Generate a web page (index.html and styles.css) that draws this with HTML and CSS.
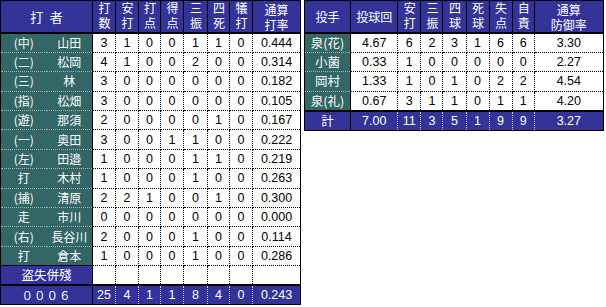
FILE: index.html
```html
<!DOCTYPE html>
<html lang="ja">
<head>
<meta charset="utf-8">
<link rel="stylesheet" href="styles.css">
</head>
<body>
<div class="sheet">
  <table class="grid bat">
    <colgroup>
      <col class="w46"><col class="w46">
      <col class="w23"><col class="w23"><col class="w22"><col class="w23"><col class="w24"><col class="w22"><col class="w23">
      <col class="w48">
    </colgroup>
    <thead>
      <tr>
        <th colspan="2" class="spaced">打&ensp;者</th>
        <th><span class="v">打数</span></th><th><span class="v">安打</span></th><th><span class="v">打点</span></th><th><span class="v">得点</span></th><th><span class="v">三振</span></th><th><span class="v">四死</span></th><th><span class="v">犠打</span></th><th>通算<br>打率</th>
      </tr>
    </thead>
    <tbody>
      <tr><td class="pos">(中)</td><td class="name">山田</td><td>3</td><td>1</td><td>0</td><td>0</td><td>1</td><td>1</td><td>0</td><td>0.444</td></tr>
      <tr><td class="pos">(二)</td><td class="name">松岡</td><td>4</td><td>1</td><td>0</td><td>0</td><td>2</td><td>0</td><td>0</td><td>0.314</td></tr>
      <tr><td class="pos">(三)</td><td class="name">林</td><td>3</td><td>0</td><td>0</td><td>0</td><td>0</td><td>0</td><td>0</td><td>0.182</td></tr>
      <tr><td class="pos">(指)</td><td class="name">松畑</td><td>3</td><td>0</td><td>0</td><td>0</td><td>0</td><td>0</td><td>0</td><td>0.105</td></tr>
      <tr><td class="pos">(遊)</td><td class="name">那須</td><td>2</td><td>0</td><td>0</td><td>0</td><td>0</td><td>1</td><td>0</td><td>0.167</td></tr>
      <tr><td class="pos">(一)</td><td class="name">奥田</td><td>3</td><td>0</td><td>0</td><td>1</td><td>1</td><td>0</td><td>0</td><td>0.222</td></tr>
      <tr><td class="pos">(左)</td><td class="name">田邉</td><td>1</td><td>0</td><td>0</td><td>0</td><td>1</td><td>1</td><td>0</td><td>0.219</td></tr>
      <tr><td class="pos">打</td><td class="name">木村</td><td>1</td><td>0</td><td>0</td><td>0</td><td>1</td><td>0</td><td>0</td><td>0.263</td></tr>
      <tr><td class="pos">(捕)</td><td class="name">清原</td><td>2</td><td>2</td><td>1</td><td>0</td><td>0</td><td>1</td><td>0</td><td>0.300</td></tr>
      <tr><td class="pos">走</td><td class="name">市川</td><td>0</td><td>0</td><td>0</td><td>0</td><td>0</td><td>0</td><td>0</td><td>0.000</td></tr>
      <tr><td class="pos">(右)</td><td class="name">長谷川</td><td>2</td><td>0</td><td>0</td><td>0</td><td>1</td><td>0</td><td>0</td><td>0.114</td></tr>
      <tr><td class="pos">打</td><td class="name">倉本</td><td>1</td><td>0</td><td>0</td><td>0</td><td>1</td><td>0</td><td>0</td><td>0.286</td></tr>
      <tr class="misc"><td colspan="2" class="label">盗失併殘</td><td></td><td></td><td></td><td></td><td></td><td></td><td></td><td></td></tr>
      <tr class="total"><td colspan="2" class="label wide">０００６</td><td>25</td><td>4</td><td>1</td><td>1</td><td>8</td><td>4</td><td>0</td><td>0.243</td></tr>
    </tbody>
  </table>

  <table class="grid pit">
    <colgroup>
      <col class="w46"><col class="w47">
      <col class="w23"><col class="w22"><col class="w23"><col class="w23"><col class="w23"><col class="w22">
      <col class="w69">
    </colgroup>
    <thead>
      <tr>
        <th>投手</th><th>投球回</th><th><span class="v">安打</span></th><th><span class="v">三振</span></th><th><span class="v">四球</span></th><th><span class="v">死球</span></th><th><span class="v">失点</span></th><th><span class="v">自責</span></th><th>通算<br>防御率</th>
      </tr>
    </thead>
    <tbody>
      <tr><td class="pname">泉(花)</td><td class="ip">4.67</td><td>6</td><td>2</td><td>3</td><td>1</td><td>6</td><td>6</td><td>3.30</td></tr>
      <tr><td class="pname">小菌</td><td class="ip">0.33</td><td>1</td><td>0</td><td>0</td><td>0</td><td>0</td><td>0</td><td>2.27</td></tr>
      <tr><td class="pname">岡村</td><td class="ip">1.33</td><td>1</td><td>0</td><td>1</td><td>0</td><td>2</td><td>2</td><td>4.54</td></tr>
      <tr><td class="pname">泉(礼)</td><td class="ip">0.67</td><td>3</td><td>1</td><td>1</td><td>0</td><td>1</td><td>1</td><td>4.20</td></tr>
      <tr class="total"><td class="label">計</td><td class="ip">7.00</td><td>11</td><td>3</td><td>5</td><td>1</td><td>9</td><td>9</td><td>3.27</td></tr>
    </tbody>
  </table>
</div>
</body>
</html>
```

FILE: styles.css
```css
* { box-sizing: border-box; }

body {
  margin: 0;
  background: #ffffff;
  font-family: "Liberation Sans", "Noto Sans CJK JP", sans-serif;
  color: #000;
}

.sheet {
  display: flex;
  align-items: flex-start;
  gap: 3px;
}

.grid {
  border-collapse: collapse;
  table-layout: fixed;
  border: 1px solid #000;
}

.bat { width: 301px; }
.pit { width: 300px; }

.w22 { width: 22px; }
.w23 { width: 23px; }
.w24 { width: 24px; }
.w46 { width: 46px; }
.w47 { width: 47px; }
.w48 { width: 48px; }
.w69 { width: 69px; }

.grid th {
  height: 32px;
  padding: 0;
  background: #333399;
  color: #fff;
  font-family: "Noto Sans CJK JP", sans-serif;
  font-weight: 400;
  font-size: 12px;
  line-height: 15px;
  text-align: center;
  vertical-align: middle;
  border: 1px solid #000;
  border-bottom: 2px solid #000;
}

.grid th .v {
  display: inline-block;
  writing-mode: vertical-rl;
  text-orientation: upright;
  white-space: nowrap;
  letter-spacing: 3px;
  line-height: 14px;
  padding-top: 1px;
  vertical-align: middle;
}

.grid th.spaced { font-size: 13px; }

.grid td {
  height: 19.4px;
  padding: 0;
  font-size: 12.5px;
  line-height: 16px;
  text-align: center;
  vertical-align: middle;
  border: 1px dotted #000;
  white-space: nowrap;
}

.grid td.pos,
.grid td.name,
.grid td.pname {
  background: #336666;
  color: #fff;
  font-family: "Noto Sans CJK JP", sans-serif;
  font-size: 12px;
  border-left: 1px solid #000;
  border-right: 1px solid #000;
  border-top: 1px dotted #9fb3b3;
  border-bottom: 1px dotted #9fb3b3;
}

.grid td.pos { border-right: none; }
.grid td.name { border-left: none; }

.grid td.pname { font-size: 12.5px; }

.grid td.ip { border-left: 1px solid #000; }

.misc td { height: 19px; }
.misc td.label,
.total td {
  background: #333399;
  color: #fff;
}

.misc td.label {
  font-family: "Noto Sans CJK JP", sans-serif;
  font-size: 12.5px;
  border: 1px solid #000;
}

.total td {
  height: 20px;
  border-top: 2px solid #000;
  border-bottom: 1px solid #000;
  border-left: 1px dotted #c8c8e8;
  border-right: 1px dotted #c8c8e8;
}

.total td.label {
  font-family: "Noto Sans CJK JP", sans-serif;
  font-size: 12.5px;
  border-left: 1px solid #000;
  border-right: 1px solid #000;
}

.total td.wide {
  font-size: 11.5px;
  letter-spacing: 1px;
}

.pit .total td { border-top: 2px solid #000; }
```
